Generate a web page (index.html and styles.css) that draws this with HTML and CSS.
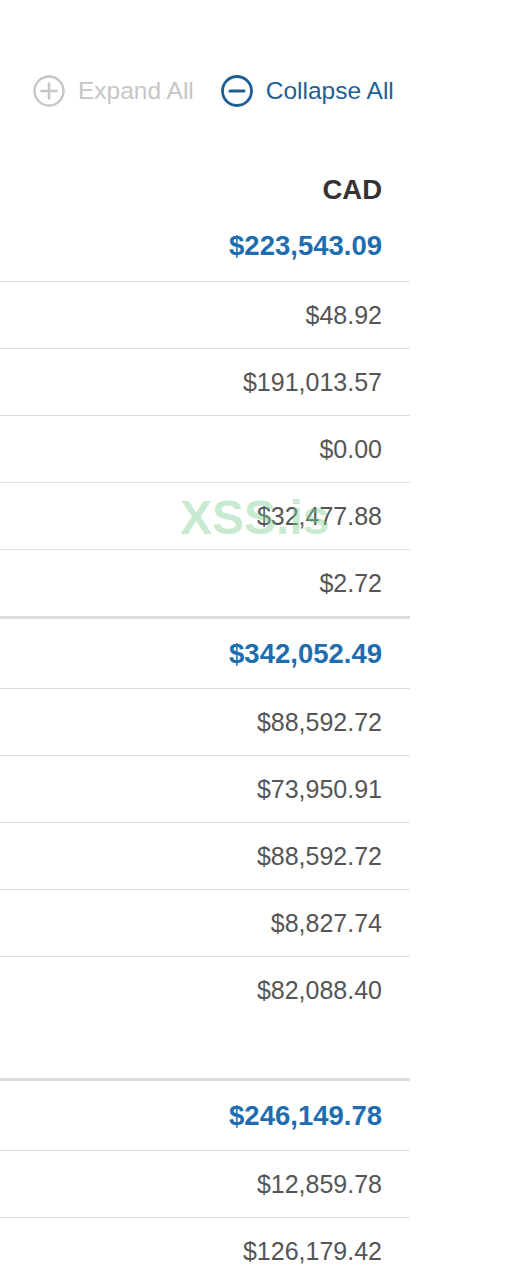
FILE: index.html
```html
<!DOCTYPE html>
<html lang="en">
<head>
<meta charset="utf-8">
<title>Balances</title>
<link rel="stylesheet" href="styles.css">
</head>
<body>
<div class="page">
  <div class="toolbar">
    <button class="tool tool--disabled" type="button">
      <svg class="tool-icon" viewBox="0 0 32 32" width="32" height="32" aria-hidden="true">
        <circle cx="16" cy="16" r="14.5" fill="none" stroke="currentColor" stroke-width="2.4"/>
        <path d="M16 8.5v15M8.5 16h15" stroke="currentColor" stroke-width="2.6" stroke-linecap="round"/>
      </svg>
      <span>Expand All</span>
    </button>
    <button class="tool tool--active" type="button">
      <svg class="tool-icon" viewBox="0 0 32 32" width="32" height="32" aria-hidden="true">
        <circle cx="16" cy="16" r="14.5" fill="none" stroke="currentColor" stroke-width="2.8"/>
        <path d="M9 16h14" stroke="currentColor" stroke-width="3.2" stroke-linecap="round"/>
      </svg>
      <span>Collapse All</span>
    </button>
  </div>

  <div class="table">
    <div class="head-row">CAD</div>

    <div class="group group--first">
      <div class="total-row">$223,543.09</div>
      <div class="item-row">$48.92</div>
      <div class="item-row">$191,013.57</div>
      <div class="item-row">$0.00</div>
      <div class="item-row">$32,477.88</div>
      <div class="item-row">$2.72</div>
    </div>

    <div class="group">
      <div class="total-row">$342,052.49</div>
      <div class="item-row">$88,592.72</div>
      <div class="item-row">$73,950.91</div>
      <div class="item-row">$88,592.72</div>
      <div class="item-row">$8,827.74</div>
      <div class="item-row">$82,088.40</div>
      <div class="group-spacer"></div>
    </div>

    <div class="group">
      <div class="total-row">$246,149.78</div>
      <div class="item-row">$12,859.78</div>
      <div class="item-row">$126,179.42</div>
    </div>
  </div>

  <div class="watermark">XSS.is</div>
</div>
</body>
</html>
```

FILE: styles.css
```css
html, body {
  margin: 0;
  padding: 0;
  background: #ffffff;
}

body {
  font-family: "Liberation Sans", Arial, sans-serif;
  color: #555555;
}

.page {
  position: relative;
  width: 509px;
  height: 1280px;
  overflow: hidden;
}

.toolbar {
  display: flex;
  align-items: center;
  gap: 27px;
  height: 40px;
  margin-top: 71px;
  padding-left: 33px;
}

.tool {
  display: flex;
  align-items: center;
  gap: 13px;
  padding: 0;
  border: 0;
  background: none;
  font-family: inherit;
  font-size: 24.5px;
  cursor: pointer;
}

.tool-icon {
  display: block;
  flex: none;
}

.tool--disabled {
  color: #c6c6c6;
}

.tool--active {
  color: #1f5e95;
}

.table {
  width: 410px;
  margin-top: 59px;
}

.head-row {
  display: flex;
  align-items: center;
  justify-content: flex-end;
  height: 40px;
  padding-right: 28px;
  font-size: 27.5px;
  font-weight: bold;
  color: #333333;
}

.total-row,
.item-row {
  display: flex;
  align-items: center;
  justify-content: flex-end;
  padding-right: 28px;
}

.total-row {
  height: 69px;
  font-size: 27.5px;
  font-weight: bold;
  color: #1d6db0;
}

.group--first .total-row {
  height: 71px;
}

.group {
  border-top: 3px solid #dcdcdc;
}

.group--first {
  border-top: 0;
}

.item-row {
  height: 66px;
  border-top: 1px solid #dddddd;
  font-size: 25px;
  color: #555555;
}

.group-spacer {
  height: 55px;
}

.watermark {
  position: absolute;
  left: 180px;
  top: 490px;
  font-size: 48px;
  font-weight: bold;
  color: rgba(120, 205, 140, 0.42);
  pointer-events: none;
}
```
